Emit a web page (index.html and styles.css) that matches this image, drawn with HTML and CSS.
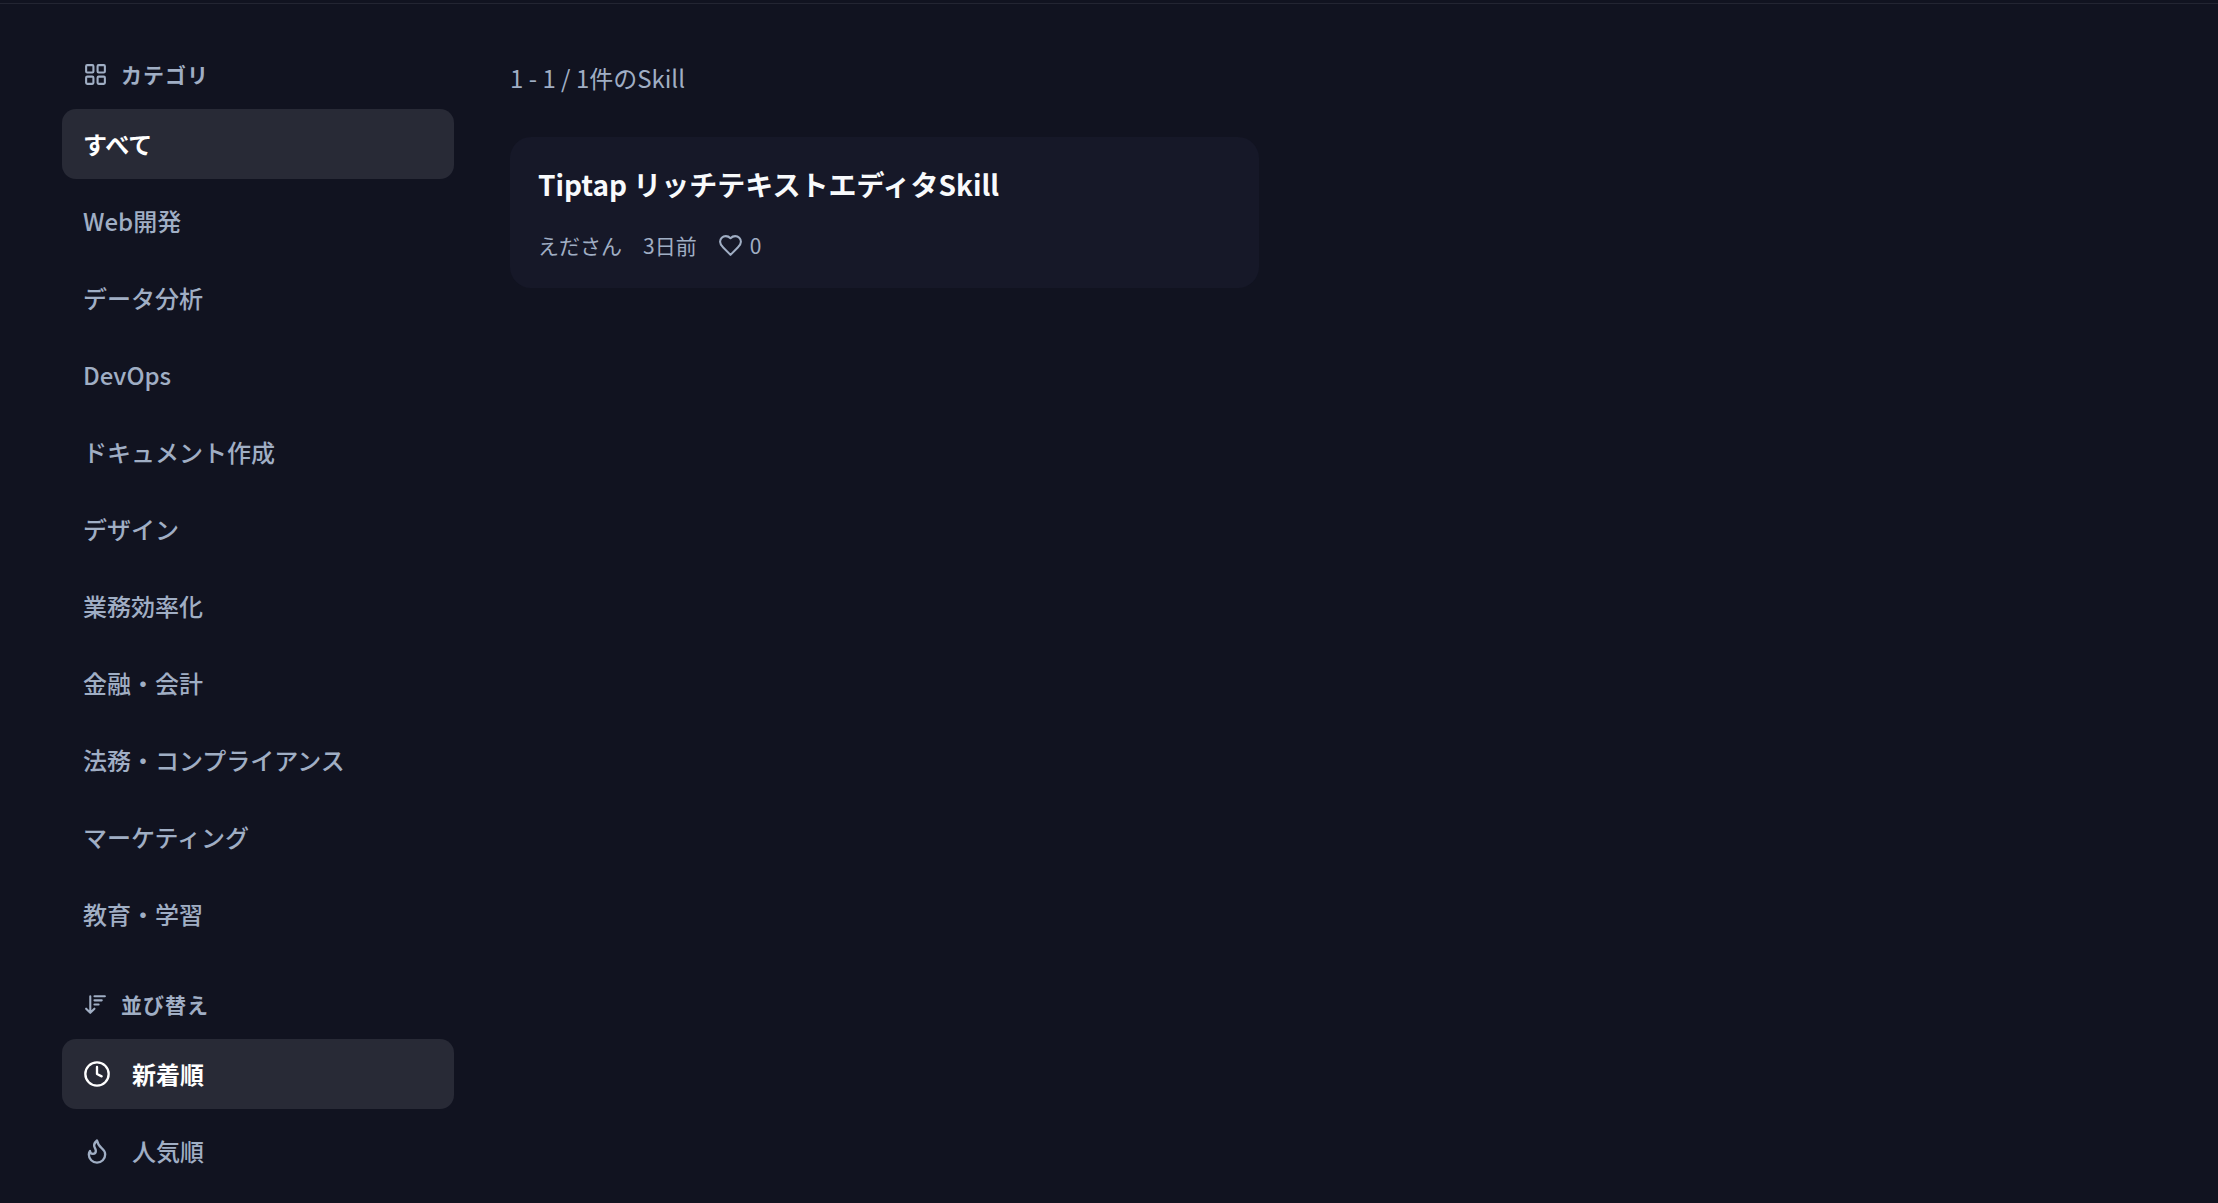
FILE: index.html
```html
<!DOCTYPE html>
<html lang="ja">
<head>
<meta charset="utf-8">
<meta name="viewport" content="width=device-width, initial-scale=1">
<title>Skill一覧</title>
<link rel="stylesheet" href="styles.css">
</head>
<body>
<div class="page">
  <aside class="sidebar">
    <nav class="group" aria-labelledby="category-title">
      <h2 class="group-title" id="category-title">
        <svg class="icon" viewBox="0 0 24 24" aria-hidden="true"><rect x="3" y="3" width="7" height="7" rx="1"/><rect x="14" y="3" width="7" height="7" rx="1"/><rect x="3" y="14" width="7" height="7" rx="1"/><rect x="14" y="14" width="7" height="7" rx="1"/></svg>
        カテゴリ
      </h2>
      <div class="options">
        <button type="button" class="option active" aria-current="true">すべて</button>
        <button type="button" class="option">Web開発</button>
        <button type="button" class="option">データ分析</button>
        <button type="button" class="option">DevOps</button>
        <button type="button" class="option">ドキュメント作成</button>
        <button type="button" class="option">デザイン</button>
        <button type="button" class="option">業務効率化</button>
        <button type="button" class="option">金融・会計</button>
        <button type="button" class="option">法務・コンプライアンス</button>
        <button type="button" class="option">マーケティング</button>
        <button type="button" class="option">教育・学習</button>
      </div>
    </nav>
    <nav class="group" aria-labelledby="sort-title">
      <h2 class="group-title" id="sort-title">
        <svg class="icon" viewBox="0 0 24 24" aria-hidden="true"><path d="m3 16 4 4 4-4M7 20V4M11 4h10M11 8h7M11 12h4"/></svg>
        並び替え
      </h2>
      <div class="options">
        <button type="button" class="option active" aria-current="true">
          <svg class="icon large" viewBox="0 0 24 24" aria-hidden="true"><circle cx="12" cy="12" r="10"/><path d="M12 6v6l4 2"/></svg>
          新着順
        </button>
        <button type="button" class="option">
          <svg class="icon large" viewBox="0 0 24 24" aria-hidden="true"><path d="M8.500 14.500A2.500 2.500 0 0 0 11 12c0-1.380-.5-2-1-3-1.072-2.143-.224-4.054 2-6 .5 2.500 2 4.900 4 6.500 2 1.600 3 3.500 3 5.500a7 7 0 1 1-14 0c0-1.153.433-2.294 1-3a2.500 2.500 0 0 0 2.500 2.500z"/></svg>
          人気順
        </button>
      </div>
    </nav>
  </aside>
  <main class="results">
    <p class="count">1 - 1 / 1件のSkill</p>
    <div class="cards">
      <article class="card">
        <h3 class="card-title">Tiptap リッチテキストエディタSkill</h3>
        <div class="meta">
          <span>えださん</span>
          <span>3日前</span>
          <span class="likes">
            <svg class="icon" viewBox="0 0 24 24" aria-hidden="true"><path d="M19 14c1.490-1.460 3-3.210 3-5.500A5.500 5.500 0 0 0 16.500 3c-1.760 0-3 .5-4.500 2-1.500-1.500-2.740-2-4.500-2A5.500 5.500 0 0 0 2 8.500c0 2.300 1.500 4.050 3 5.500l7 7Z"/></svg>
            0
          </span>
        </div>
      </article>
    </div>
  </main>
</div>
</body>
</html>
```
FILE: styles.css
```css
* { box-sizing: border-box; }

body {
  margin: 0;
  padding-top: 3px;
  background: #111320;
  color: #a0aec4;
  font-family: "Noto Sans CJK JP", sans-serif;
}

.page {
  display: flex;
  align-items: flex-start;
  gap: 56px;
  padding: 57px 62px 8px;
  border-top: 1px solid #232532;
}

.sidebar {
  flex: 0 0 392px;
  display: flex;
  flex-direction: column;
  gap: 42px;
}

.group-title {
  display: flex;
  align-items: center;
  gap: 13px;
  margin: 0 0 22px;
  padding: 0 21px;
  font-size: 21px;
  line-height: 26px;
  font-weight: 700;
  letter-spacing: 1px;
}

.options {
  display: flex;
  flex-direction: column;
  gap: 7px;
}

.option {
  display: flex;
  align-items: center;
  gap: 21px;
  height: 70px;
  padding: 0 21px;
  border: 0;
  border-radius: 14px;
  background: none;
  color: inherit;
  font: inherit;
  font-size: 24px;
  line-height: 36px;
  font-weight: 500;
  text-align: left;
  cursor: pointer;
}

.option.active {
  background: #282a36;
  color: #fff;
  font-weight: 700;
}

.icon {
  flex: none;
  width: 25px;
  height: 25px;
  fill: none;
  stroke: currentColor;
  stroke-width: 2;
  stroke-linecap: round;
  stroke-linejoin: round;
}

.icon.large {
  width: 28px;
  height: 28px;
}

.results {
  flex: 1;
  min-width: 0;
}

.count {
  margin: 0 0 42px;
  font-size: 24px;
  line-height: 34px;
}

.cards {
  display: grid;
  grid-template-columns: repeat(2, 1fr);
  gap: 28px;
  max-width: 1526px;
}

.card {
  display: flex;
  flex-direction: column;
  gap: 27px;
  padding: 28px;
  border-radius: 21px;
  background: #161828;
}

.card-title {
  margin: 0;
  color: #f8fafc;
  font-size: 28px;
  line-height: 38px;
  font-weight: 700;
}

.meta {
  display: flex;
  align-items: center;
  gap: 21px;
  font-size: 21px;
  line-height: 30px;
}

.likes {
  display: flex;
  align-items: center;
  gap: 7px;
}
```
